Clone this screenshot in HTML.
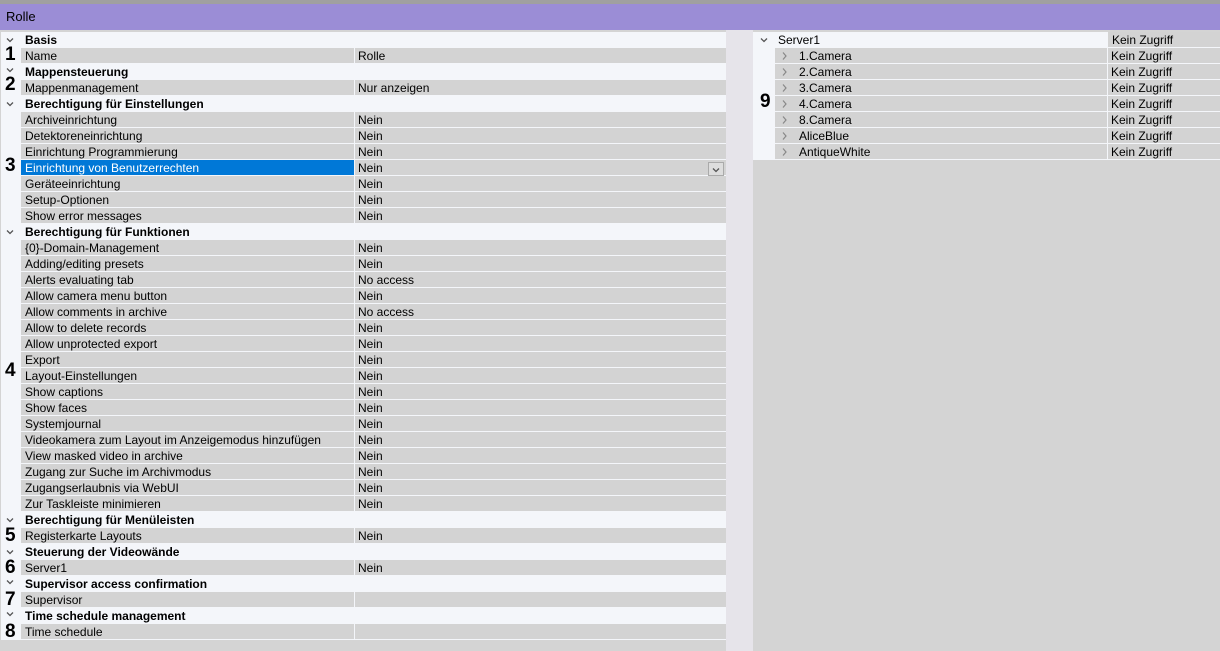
<!DOCTYPE html>
<html><head><meta charset="utf-8"><style>
*{margin:0;padding:0;box-sizing:border-box}
body{width:1220px;height:651px;background:#d4d4d4;font-family:"Liberation Sans","DejaVu Sans",sans-serif;font-size:12px;color:#000;position:relative;overflow:hidden}
.top{position:absolute;left:0;top:0;width:1220px;height:4px;background:#a0a0a0}
.title{position:absolute;left:0;top:4px;width:1220px;height:26px;background:#9b8dd6;font-size:13px;padding:5px 0 0 6px}
.lp{position:absolute;left:1px;top:32px;width:725px;height:608px;background:#f4f6fa}
.gut{position:absolute;left:726px;top:30px;width:27px;height:621px;background:#e6e4ea}
.r{position:absolute;left:21px;width:705px;height:15px;background:#d3d3d3;line-height:16px}
.r .k{position:absolute;left:4px;top:0}
.r .v{position:absolute;left:333px;top:0;height:15px;border-left:1px solid #f4f6fa;padding-left:3px;width:372px}
.h{position:absolute;left:25px;height:16px;line-height:16px;font-weight:bold}
.ch{position:absolute;left:6px;width:8px;height:6px}
.n{position:absolute;left:5px;font-size:19px;font-weight:bold;line-height:19px}
.sel{background:#0078d7;color:#fff;width:333px !important;height:15px;position:absolute;left:0;top:0;padding-left:4px}
.rp{position:absolute;left:753px;top:32px;width:467px;height:128px;background:#f4f6fa}
.rr{position:absolute;left:775px;width:445px;height:15px;background:#d3d3d3;line-height:16px}
.rr .v{position:absolute;left:332px;top:0;height:15px;border-left:1px solid #f4f6fa;padding-left:3px;width:113px}
.rc{position:absolute;left:7px;top:4px;width:5px;height:8px}
.dd{position:absolute;left:708px;top:162px;width:16px;height:14px;border:1px solid #aaa;background:#ddd}
</style></head><body>
<svg width="0" height="0" style="position:absolute"><defs>
<symbol id="d" viewBox="0 0 8 6"><path d="M1 1.5 L4 4.5 L7 1.5" fill="none" stroke="#555" stroke-width="1.3"/></symbol>
<symbol id="rgt" viewBox="0 0 5 8"><path d="M1 0.5 L4 4 L1 7.5" fill="none" stroke="#888" stroke-width="1.2"/></symbol>
</defs></svg>
<div class="top"></div>
<div class="title">Rolle</div>
<div class="lp"></div>
<div class="gut"></div>
<div class="rp"></div>

<svg class="ch" style="top:37px"><use href="#d"/></svg><div class="h" style="top:32px">Basis</div>
<div class="r" style="top:48px"><span class="k">Name</span><span class="v">Rolle</span></div>
<svg class="ch" style="top:67px"><use href="#d"/></svg><div class="h" style="top:64px">Mappensteuerung</div>
<div class="r" style="top:80px"><span class="k">Mappenmanagement</span><span class="v">Nur anzeigen</span></div>
<svg class="ch" style="top:101px"><use href="#d"/></svg><div class="h" style="top:96px">Berechtigung für Einstellungen</div>
<div class="r" style="top:112px"><span class="k">Archiveinrichtung</span><span class="v">Nein</span></div>
<div class="r" style="top:128px"><span class="k">Detektoreneinrichtung</span><span class="v">Nein</span></div>
<div class="r" style="top:144px"><span class="k">Einrichtung Programmierung</span><span class="v">Nein</span></div>
<div class="r" style="top:160px"><span class="sel">Einrichtung von Benutzerrechten</span><span class="v">Nein</span></div>
<div class="r" style="top:176px"><span class="k">Geräteeinrichtung</span><span class="v">Nein</span></div>
<div class="r" style="top:192px"><span class="k">Setup-Optionen</span><span class="v">Nein</span></div>
<div class="r" style="top:208px"><span class="k">Show error messages</span><span class="v">Nein</span></div>
<svg class="ch" style="top:229px"><use href="#d"/></svg><div class="h" style="top:224px">Berechtigung für Funktionen</div>
<div class="r" style="top:240px"><span class="k">{0}-Domain-Management</span><span class="v">Nein</span></div>
<div class="r" style="top:256px"><span class="k">Adding/editing presets</span><span class="v">Nein</span></div>
<div class="r" style="top:272px"><span class="k">Alerts evaluating tab</span><span class="v">No access</span></div>
<div class="r" style="top:288px"><span class="k">Allow camera menu button</span><span class="v">Nein</span></div>
<div class="r" style="top:304px"><span class="k">Allow comments in archive</span><span class="v">No access</span></div>
<div class="r" style="top:320px"><span class="k">Allow to delete records</span><span class="v">Nein</span></div>
<div class="r" style="top:336px"><span class="k">Allow unprotected export</span><span class="v">Nein</span></div>
<div class="r" style="top:352px"><span class="k">Export</span><span class="v">Nein</span></div>
<div class="r" style="top:368px"><span class="k">Layout-Einstellungen</span><span class="v">Nein</span></div>
<div class="r" style="top:384px"><span class="k">Show captions</span><span class="v">Nein</span></div>
<div class="r" style="top:400px"><span class="k">Show faces</span><span class="v">Nein</span></div>
<div class="r" style="top:416px"><span class="k">Systemjournal</span><span class="v">Nein</span></div>
<div class="r" style="top:432px"><span class="k">Videokamera zum Layout im Anzeigemodus hinzufügen</span><span class="v">Nein</span></div>
<div class="r" style="top:448px"><span class="k">View masked video in archive</span><span class="v">Nein</span></div>
<div class="r" style="top:464px"><span class="k">Zugang zur Suche im Archivmodus</span><span class="v">Nein</span></div>
<div class="r" style="top:480px"><span class="k">Zugangserlaubnis via WebUI</span><span class="v">Nein</span></div>
<div class="r" style="top:496px"><span class="k">Zur Taskleiste minimieren</span><span class="v">Nein</span></div>
<svg class="ch" style="top:517px"><use href="#d"/></svg><div class="h" style="top:512px">Berechtigung für Menüleisten</div>
<div class="r" style="top:528px"><span class="k">Registerkarte Layouts</span><span class="v">Nein</span></div>
<svg class="ch" style="top:549px"><use href="#d"/></svg><div class="h" style="top:544px">Steuerung der Videowände</div>
<div class="r" style="top:560px"><span class="k">Server1</span><span class="v">Nein</span></div>
<svg class="ch" style="top:579px"><use href="#d"/></svg><div class="h" style="top:576px">Supervisor access confirmation</div>
<div class="r" style="top:592px"><span class="k">Supervisor</span><span class="v"></span></div>
<svg class="ch" style="top:611px"><use href="#d"/></svg><div class="h" style="top:608px">Time schedule management</div>
<div class="r" style="top:624px"><span class="k">Time schedule</span><span class="v"></span></div>
<div class="dd"><svg style="position:absolute;left:3px;top:4px;width:8px;height:6px"><use href="#d"/></svg></div>

<div class="n" style="top:45px">1</div>
<div class="n" style="top:75px">2</div>
<div class="n" style="top:156px">3</div>
<div class="n" style="top:361px">4</div>
<div class="n" style="top:526px">5</div>
<div class="n" style="top:558px">6</div>
<div class="n" style="top:590px">7</div>
<div class="n" style="top:622px">8</div>
<div class="n" style="left:760px;top:92px">9</div>

<svg class="ch" style="left:760px;top:37px"><use href="#d"/></svg>
<div style="position:absolute;left:778px;top:32px;line-height:16px">Server1</div>
<div style="position:absolute;left:1107px;top:32px;width:113px;height:15px;background:#d3d3d3;line-height:16px;padding-left:4px;border-left:1px solid #f4f6fa">Kein Zugriff</div>
<div class="rr" style="top:48px"><svg class="rc"><use href="#rgt"/></svg><span style="position:absolute;left:24px">1.Camera</span><span class="v">Kein Zugriff</span></div>
<div class="rr" style="top:64px"><svg class="rc"><use href="#rgt"/></svg><span style="position:absolute;left:24px">2.Camera</span><span class="v">Kein Zugriff</span></div>
<div class="rr" style="top:80px"><svg class="rc"><use href="#rgt"/></svg><span style="position:absolute;left:24px">3.Camera</span><span class="v">Kein Zugriff</span></div>
<div class="rr" style="top:96px"><svg class="rc"><use href="#rgt"/></svg><span style="position:absolute;left:24px">4.Camera</span><span class="v">Kein Zugriff</span></div>
<div class="rr" style="top:112px"><svg class="rc"><use href="#rgt"/></svg><span style="position:absolute;left:24px">8.Camera</span><span class="v">Kein Zugriff</span></div>
<div class="rr" style="top:128px"><svg class="rc"><use href="#rgt"/></svg><span style="position:absolute;left:24px">AliceBlue</span><span class="v">Kein Zugriff</span></div>
<div class="rr" style="top:144px"><svg class="rc"><use href="#rgt"/></svg><span style="position:absolute;left:24px">AntiqueWhite</span><span class="v">Kein Zugriff</span></div>
</body></html>
